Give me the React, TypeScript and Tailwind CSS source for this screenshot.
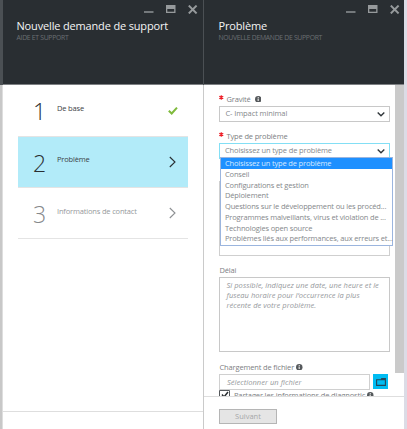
import type { ReactNode } from "react";

function WindowControls() {
  return (
    <svg className="h-[9px] w-[54px]" viewBox="0 0 54 9" fill="none">
      <path d="M0 7H9.5" stroke="#969a9c" strokeWidth="1.4" />
      <path d="M22 0h9.5v8H22z" fill="#969a9c" />
      <path d="M23.3 4h6.9v2.7h-6.9z" fill="#292e32" />
      <path d="M44.8 0.6l7.8 7.8M52.6 0.6l-7.8 7.8" stroke="#969a9c" strokeWidth="2" />
    </svg>
  );
}

function Header({ title, subtitle, wide }: { title: string; subtitle: string; wide?: boolean }) {
  return (
    <header className="h-[85px] shrink-0 border-b border-[#7d8083] bg-[#292e32]">
      <div className={`flex h-[18px] justify-end pt-[5px] ${wide ? "pr-[4px]" : "pr-[5px]"}`}>
        <WindowControls />
      </div>
      <div className={wide ? "pl-[14.5px]" : "pl-[13.5px]"}>
        <h1 className="h-[15px] text-[11px] leading-[15px] tracking-[-0.16px] whitespace-nowrap text-[#f4f5f5]">{title}</h1>
        <p className="h-[10px] text-[6.8px] leading-[10px] tracking-[-0.28px] whitespace-nowrap text-[#6b6f73]">{subtitle}</p>
      </div>
    </header>
  );
}

function Chevron({ color }: { color: string }) {
  return (
    <svg className="h-[12px] w-[7px]" viewBox="0 0 7 12" fill="none">
      <path d="M0.8 1L6 6L0.8 11" stroke={color} strokeWidth="1.1" />
    </svg>
  );
}

function Down() {
  return (
    <svg className="h-[5px] w-[8px] shrink-0" viewBox="0 0 8 5" fill="none">
      <path d="M0.7 0.6L4 3.8L7.3 0.6" stroke="#30363a" strokeWidth="1.4" />
    </svg>
  );
}

function Info() {
  return (
    <svg className="h-[6.5px] w-[6.5px] shrink-0" viewBox="0 0 6 6">
      <circle cx="3" cy="3" r="3" fill="#55595c" />
      <path d="M2.5 1h1v0.8h-1zM2.3 2.4h1.2v2.2H2.4V2.6z" fill="#e5e5e5" />
    </svg>
  );
}

function Star() {
  return (
    <svg className="mr-[3px] mb-[3px] h-[5px] w-[4.5px] shrink-0" viewBox="0 0 5 5" fill="none">
      <path d="M2.5 0v5M0.3 1.2l4.4 2.6M4.7 1.2L0.3 3.8" stroke="#ee1c25" strokeWidth="1.3" />
    </svg>
  );
}

function Step({ n, label, state }: { n: string; label: string; state: "done" | "active" | "idle" }) {
  const idle = state === "idle";
  const done = state === "done";
  return (
    <li className={`flex border-b border-[#e4e4e4] pl-[15px] ${done ? "h-[52px]" : "h-[51px]"} ${state === "active" ? "bg-[#b2ebf9]" : ""}`}>
      <span className={`w-[24px] text-[23px] leading-[53px] font-light ${idle ? "text-[#85888b]" : "text-[#292e32]"}`}>{n}</span>
      <span className={`flex-1 text-[7.5px] leading-[12px] tracking-[-0.17px] whitespace-nowrap ${state === "active" ? "pt-[16px]" : "pt-[17px]"} ${idle ? "text-[#96999c]" : "text-[#3c4246]"}`}>{label}</span>
      <span className={`flex w-[20px] items-center justify-center ${done ? "mr-[5px]" : "mr-[6px]"}`}>
        {done ? (
          <svg className="h-[8px] w-[10px]" viewBox="0 0 10 8" fill="none">
            <path d="M0.8 3.8L3.7 6.5L9 0.7" stroke="#7fba3c" strokeWidth="2" />
          </svg>
        ) : (
          <Chevron color={idle ? "#8d9093" : "#292e32"} />
        )}
      </span>
    </li>
  );
}

function Label({ children }: { children: ReactNode }) {
  return <div className="flex h-[12px] items-center text-[7.5px] leading-[12px] tracking-[-0.15px] whitespace-nowrap text-[#7d8083]">{children}</div>;
}

const options = [
  "Choisissez un type de problème",
  "Conseil",
  "Configurations et gestion",
  "Déploiement",
  "Questions sur le développement ou les procéd...",
  "Programmes malveillants, virus et violation de ...",
  "Technologies open source",
  "Problèmes liés aux performances, aux erreurs et...",
];

export default function App() {
  return (
    <div className="flex h-[429px] w-[407px] overflow-hidden bg-white font-['Open_Sans','Noto_Sans',sans-serif]">
      <div className="w-[3px] shrink-0 border-r border-[#dedede] bg-[#c8c8c8]">
        <div className="h-[85px] w-[3px] bg-[#4b5054]" />
      </div>
      <section className="flex w-[200px] shrink-0 flex-col">
        <Header title="Nouvelle demande de support" subtitle="AIDE ET SUPPORT" />
        <ul className="mr-[15px] ml-[15px] flex-1">
          <Step n="1" label="De base" state="done" />
          <Step n="2" label="Problème" state="active" />
          <Step n="3" label="Informations de contact" state="idle" />
        </ul>
        <footer className="h-[18px] border-t border-[#dedede]" />
      </section>
      <div className="w-px shrink-0 bg-[#cacaca]">
        <div className="h-[85px] bg-[#4b5054]" />
      </div>
      <section className="flex w-[200px] shrink-0 flex-col">
        <Header title="Problème" subtitle="NOUVELLE DEMANDE DE SUPPORT" wide />
        <div className="flex h-[312px] overflow-hidden border-b border-[#dedede]">
          <form className="w-[191px] shrink-0 pt-[8px] pl-[15px]">
            <Label><Star />Gravité<span className="w-[4px]" /><Info /></Label>
            <div className="mt-px flex h-[16px] w-[171px] items-center justify-between border border-[#c8c8c8] pr-[4px] pl-[5.5px] text-[7.5px] tracking-[-0.1px] text-[#85888b]">
              <span>C- Impact minimal</span><Down />
            </div>
            <div className="h-[8px]" />
            <Label><Star />Type de problème</Label>
            <div className="relative mt-[1px] h-[16px] w-[171px]">
              <div className="flex h-[16px] items-center justify-between border border-[#83dff5] pr-[4px] pl-[5px] text-[7.5px] tracking-[-0.14px] text-[#85888b]">
                <span>{options[0]}</span><Down />
              </div>
              <ul className="absolute top-[14px] left-px z-10 h-[89px] w-[173px] border border-[#9bb5de] bg-white text-[7.5px] leading-[10.7px] tracking-[-0.16px] text-[#85888b]">
                {options.map((o, i) => (
                  <li key={o} className={`h-[10.75px] pl-[4px] whitespace-nowrap ${i === 0 ? "bg-[#1e90ff] text-[#d6eaff]" : ""}`}>{o}</li>
                ))}
              </ul>
            </div>
            <div className="mt-[22px] h-[75px] w-[171px] border border-[#cfcfcf]" />
            <div className="h-[8px]" />
            <div className="pl-[0.5px]">
              <Label>Délai</Label>
            </div>
            <div className="mt-px h-[75px] w-[171px] border border-[#c8c8c8] pt-[2px] pl-[6.5px] text-[7.5px] leading-[10.2px] tracking-[0.04px] whitespace-nowrap text-[#96999c] italic">
              <p>Si possible, indiquez une date, une heure et le</p>
              <p>fuseau horaire pour l’occurrence la plus</p>
              <p>récente de votre problème.</p>
            </div>
            <div className="h-[9px]" />
            <div className="pl-[0.5px]">
              <Label>Chargement de fichier<span className="w-[2px]" /><Info /></Label>
            </div>
            <div className="mt-px flex h-[15px]">
              <div className="h-[16px] w-[151px] border border-[#d0d0d0] pl-[7px] text-[7.5px] leading-[14px] tracking-[0.04px] text-[#96999c] italic">Sélectionner un fichier</div>
              <div className="ml-[3px] flex h-[15px] w-[15px] items-center justify-center bg-[#00bcf2]">
                <svg className="h-[8px] w-[10px]" viewBox="0 0 10 8" fill="none">
                  <path d="M0.6 1.8H5l0.7-1.2h3.7v6.8H0.6zM5 1.8h4.4" stroke="#25475a" strokeWidth="1.1" />
                </svg>
              </div>
            </div>
            <div className="mt-px flex items-start text-[7.5px] leading-[10px] tracking-[-0.14px] whitespace-nowrap text-[#7d8083]">
              <svg className="mr-[4px] h-[11px] w-[11px]" viewBox="0 0 11 11" fill="none">
                <path d="M0.5 0.5h10v10h-10z" stroke="#55595c" />
                <path d="M3 4.5l2 2.5L9 2" stroke="#292e32" strokeWidth="1.5" />
              </svg>
              Partager les informations de diagnostic<span className="mt-[2px] ml-[2px]"><Info /></span>
            </div>
          </form>
          <div className="h-[288px] w-[9px] bg-[#cacaca]" />
        </div>
        <footer className="flex-1 pt-[12px] pl-[15px]">
          <button className="block h-[15px] w-[58px] border border-[#b5b5b5] bg-[#e5e5e5] text-center text-[7.5px] leading-[13px] text-[#a5a7a9]">Suivant</button>
        </footer>
      </section>
      <div className="flex-1 bg-[#dcdce6]" />
    </div>
  );
}
